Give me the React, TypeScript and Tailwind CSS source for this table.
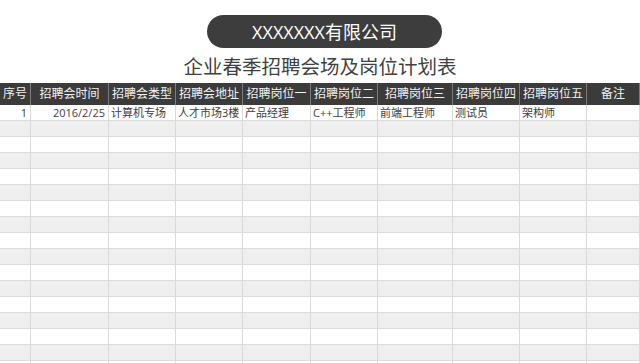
import React from "react";

const cols = "grid grid-cols-[31px_78px_67px_67px_68px_67px_75px_67px_67px_1fr]";

const headers = [
  "序号",
  "招聘会时间",
  "招聘会类型",
  "招聘会地址",
  "招聘岗位一",
  "招聘岗位二",
  "招聘岗位三",
  "招聘岗位四",
  "招聘岗位五",
  "备注",
];

const first = ["1", "2016/2/25", "计算机专场", "人才市场3楼", "产品经理", "C++工程师", "前端工程师", "测试员", "架构师", ""];

export default function App() {
  const rows = Array.from({ length: 17 }, (_, i) => i);
  return (
    <div
      className="w-[640px] h-[363px] overflow-hidden bg-white flex flex-col"
      style={{ fontFamily: '"Open Sans", "Noto Sans CJK SC", sans-serif' }}
    >
      <div className="shrink-0 flex justify-center pt-[15px] pl-[9px]">
        <div className="w-[235px] h-[33px] rounded-full bg-[#3d3d3d] flex items-center justify-center text-white text-[18px] leading-none">
          XXXXXXX有限公司
        </div>
      </div>
      <div className="shrink-0 flex justify-center h-[35px] items-center text-[19.5px] leading-none text-[#3f3f3f] pt-[2px]">
        企业春季招聘会场及岗位计划表
      </div>
      <div className={`${cols} shrink-0 h-[22px] bg-[#3b3b3b] text-[12px] text-[#f2f2f2]`}>
        {headers.map((h, i) => (
          <div
            key={i}
            className="flex items-center justify-center border-r border-[#7c7c7c] whitespace-nowrap overflow-hidden leading-none"
          >
            {h}
          </div>
        ))}
      </div>
      {rows.map((r) => (
        <div
          key={r}
          className={`${cols} h-[16px] shrink-0 border-b border-[#dcdcdc] text-[11px] text-[#404040] ${
            r % 2 === 1 ? "bg-[#efefef]" : "bg-white"
          }`}
        >
          {first.map((c, i) => (
            <div
              key={i}
              className={`flex items-center border-r border-[#dadada] whitespace-nowrap overflow-hidden leading-none ${
                i < 2 ? "justify-end pr-[3px]" : "justify-start pl-[2px]"
              }`}
            >
              {r === 0 ? c : ""}
            </div>
          ))}
        </div>
      ))}
    </div>
  );
}
